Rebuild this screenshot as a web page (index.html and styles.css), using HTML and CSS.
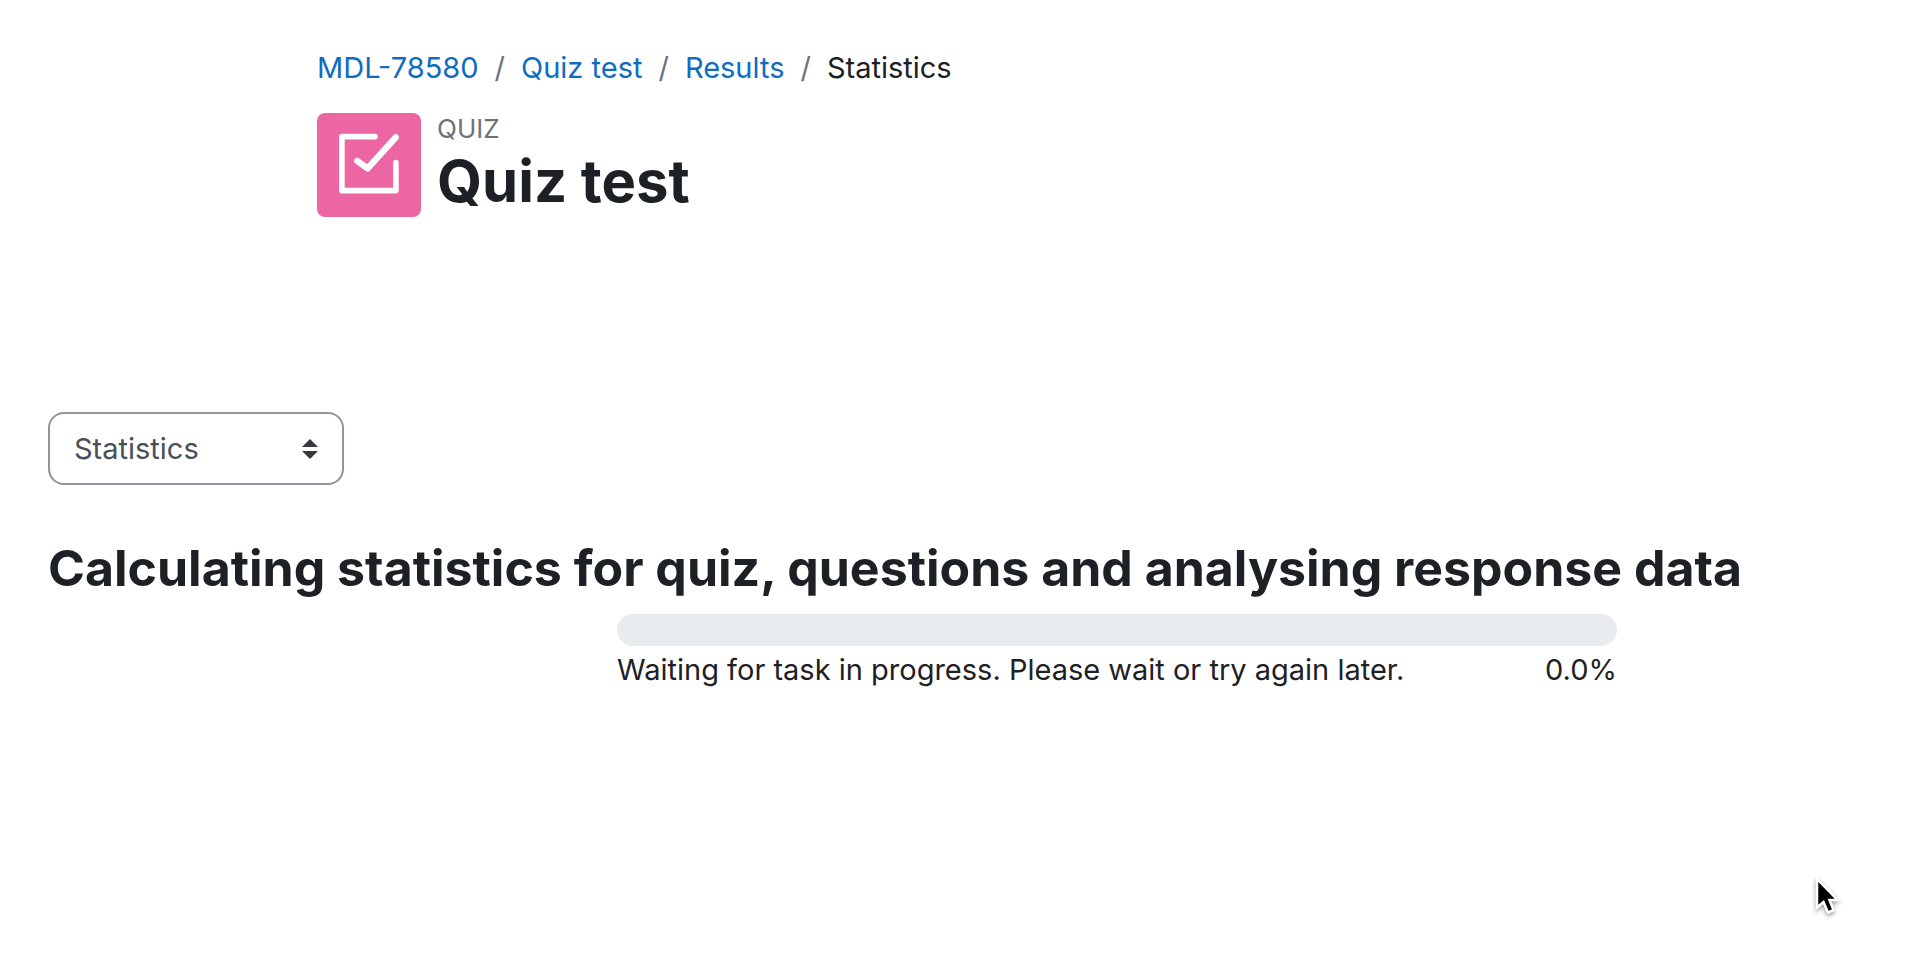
FILE: index.html
```html
<!DOCTYPE html>
<html lang="en">
<head>
  <meta charset="UTF-8">
  <meta name="viewport" content="width=device-width, initial-scale=1.0">
  <title>Quiz test: Statistics</title>
  <link rel="stylesheet" href="styles.css">
</head>
<body>
  <header class="page-header">
    <nav aria-label="Navigation bar">
      <ol class="breadcrumb">
        <li><a href="#">MDL-78580</a></li>
        <li><a href="#">Quiz test</a></li>
        <li><a href="#">Results</a></li>
        <li>Statistics</li>
      </ol>
    </nav>
    <div class="page-context">
      <div class="activity-icon">
        <svg viewBox="0 0 104 104" fill="none" stroke="#fff" stroke-width="5.6" stroke-linecap="round" stroke-linejoin="round" aria-hidden="true">
          <path d="M58 23.6H24.9V77.6H78.9V49.6"/>
          <path d="M40.3 48L50.6 55.4L78.7 24.4" stroke-width="6.4"/>
        </svg>
      </div>
      <div>
        <div class="activity-type">QUIZ</div>
        <h1>Quiz test</h1>
      </div>
    </div>
  </header>

  <main class="content">
    <div class="report-select">
      <select aria-label="Report">
        <option>Statistics</option>
      </select>
      <svg class="arrows" viewBox="0 0 16 20" aria-hidden="true">
        <path d="M8 0L16 8H0zM8 20L0 12H16z" fill="#343a40"/>
      </svg>
    </div>

    <h2>Calculating statistics for quiz, questions and analysing response data</h2>
    <div class="progress-box">
      <div class="progress" role="progressbar" aria-label="Task progress" aria-valuenow="0" aria-valuemin="0" aria-valuemax="100"></div>
      <div class="progress-info">
        <span>Waiting for task in progress. Please wait or try again later.</span>
        <span>0.0%</span>
      </div>
    </div>
  </main>

  <svg class="pointer" viewBox="0 0 28 40" aria-hidden="true">
    <path d="M3 3V31.5L9.5 26L14 36.5L19.5 34L15.5 24H23.5z" fill="#000" stroke="#fff" stroke-width="2.5"/>
  </svg>
</body>
</html>
```

FILE: styles.css
```css
body { margin: 0; font-family: Inter, sans-serif; font-size: 29px; line-height: 40px; color: #1d2125; background: #fff; }
a { color: #0f6cbf; text-decoration: none; }
a:hover { text-decoration: underline; }
h1, h2 { margin: 0; font-weight: 700; }
.page-header { padding: 48px 317px 0; }
.breadcrumb { display: flex; margin: 0; padding: 0; list-style: none; }
.breadcrumb li + li::before { content: "/"; padding: 0 16px; color: #6a737b; }
.page-context { display: flex; align-items: center; gap: 16px; margin-top: 25px; }
.activity-icon { width: 104px; height: 104px; border-radius: 8px; background: #eb66a2; }
.activity-icon svg { display: block; }
.activity-type { font-size: 26px; line-height: 32px; color: #6a737b; }
h1 { font-size: 58px; line-height: 72px; }
.content { padding: 195px 48px 0; }
.report-select { position: relative; width: 296px; }
.report-select select { appearance: none; display: block; width: 100%; height: 73px; padding: 0 24px; border: 2px solid #8f959e; border-radius: 16px; background: #fff; color: #495057; font: inherit; }
.arrows { position: absolute; right: 26px; top: 27px; width: 16px; height: 20px; pointer-events: none; }
h2 { margin-top: 52px; font-size: 50px; line-height: 62px; }
.progress-box { width: 55%; margin: 15px 249px 0 auto; }
.progress { height: 32px; border-radius: 16px; background: #e9ecef; }
.progress-info { display: flex; justify-content: space-between; margin-top: 4px; }
.pointer { position: absolute; left: 1814px; top: 876px; width: 28px; height: 40px; filter: drop-shadow(0 2px 2px rgba(0, 0, 0, 0.4)); }
```
